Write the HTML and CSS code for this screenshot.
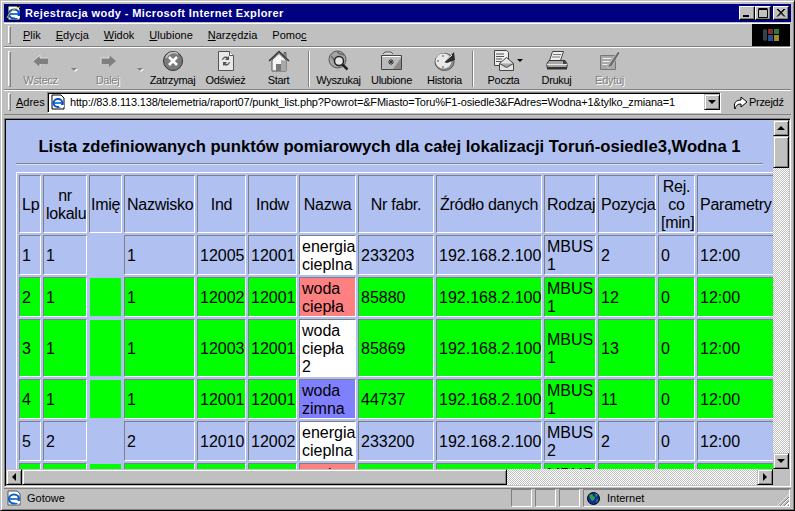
FILE: index.html
```html
<!DOCTYPE html>
<html lang="pl">

<head>
    <meta charset="UTF-8">
    <title>Rejestracja wody - Microsoft Internet Explorer</title>
    <link rel="stylesheet" href="styles.css">
</head>

<body>
    <div class="window">
        <div class="titlebar">
            <svg class="title-icon" width="16" height="16" viewBox="0 0 16 16">
                <path d="M2 1h9l3 3v11H2z" fill="#fff" stroke="#000"/>
                <ellipse cx="8" cy="9" rx="5" ry="4.5" fill="none" stroke="#0050d0" stroke-width="2.2"/>
                <path d="M3 9h10" stroke="#0050d0" stroke-width="1.6"/>
                <path d="M9 12h5" stroke="#fff" stroke-width="2"/>
                <path d="M1 13C3 7 9 3 14 2" fill="none" stroke="#f0c000"/>
            </svg>
            <span class="title-text">Rejestracja wody - Microsoft Internet Explorer</span>
            <div class="title-buttons">
                <div class="wbtn">
                    <svg width="14" height="12" viewBox="0 0 14 12"><path d="M3 8.500h6M3 9.500h6" stroke="#000"/></svg>
                </div>
                <div class="wbtn">
                    <svg width="14" height="12" viewBox="0 0 14 12"><path d="M2.500 2.500h9v8h-9zM2.500 1.500h9" fill="none" stroke="#000"/></svg>
                </div>
                <div class="wbtn wbtn-close">
                    <svg width="14" height="12" viewBox="0 0 14 12"><path d="M3 2l7 7.500M4 2l7 7.500M10 2l-7 7.500M11 2l-7 7.500" stroke="#000"/></svg>
                </div>
            </div>
        </div>

        <div class="band menubar">
            <div class="grip"></div>
            <nav class="menu">
                <span class="menu-item"><u>P</u>lik</span>
                <span class="menu-item"><u>E</u>dycja</span>
                <span class="menu-item"><u>W</u>idok</span>
                <span class="menu-item"><u>U</u>lubione</span>
                <span class="menu-item"><u>N</u>arzędzia</span>
                <span class="menu-item">Pomo<u>c</u></span>
            </nav>
            <div class="winlogo">
                <svg width="18" height="16" viewBox="0 0 18 16">
                    <path d="M1 3l2-1 2 1v10l-2 1-2-1z" fill="#354050"/>
                    <path d="M6 2h5v5H6z" fill="#8a2c20"/>
                    <path d="M12 2h5v5h-5z" fill="#2c7a38"/>
                    <path d="M6 8h5v6H6z" fill="#2a4c98"/>
                    <path d="M12 8h5v6h-5z" fill="#9a8a28"/>
                </svg>
            </div>
        </div>

        <div class="band toolbar">
            <div class="grip"></div>
            <div class="tool disabled t-back">
                <svg width="22" height="22" viewBox="0 0 22 22">
                    <path d="M3 11l7-6v3h8v6h-8v3z" fill="#808080"/>
                    <path d="M3 11l7-6v3h8M10 14v3" fill="none" stroke="#e0e0e0"/>
                </svg>
                <span>Wstecz</span>
            </div>
            <div class="drop"></div>
            <div class="tool disabled">
                <svg width="22" height="22" viewBox="0 0 22 22">
                    <path d="M19 11l-7-6v3H4v6h8v3z" fill="#808080"/>
                    <path d="M12 5v3H4v6" fill="none" stroke="#e0e0e0"/>
                </svg>
                <span>Dalej</span>
            </div>
            <div class="drop drop2"></div>
            <div class="tool">
                <svg width="22" height="22" viewBox="0 0 22 22">
                    <circle cx="11" cy="11" r="9.500" fill="#7a7a7a" stroke="#333"/>
                    <path d="M4 8a8 8 0 0 1 12-4" fill="none" stroke="#c8c8c8" stroke-width="1.500"/>
                    <path d="M7 7l8 8M15 7l-8 8" stroke="#fff" stroke-width="2.600"/>
                </svg>
                <span>Zatrzymaj</span>
            </div>
            <div class="tool">
                <svg width="22" height="22" viewBox="0 0 22 22">
                    <path d="M3.500 1.500h11l4 4v15h-15z" fill="#e8e8e8" stroke="#555"/>
                    <path d="M14.500 1.500v4h4" fill="#fff" stroke="#555"/>
                    <path d="M7 10a4 4 0 0 1 6-3l1-1v4h-4l1.500-1.500A2.500 2.500 0 0 0 8 10z" fill="#555"/>
                    <path d="M15 12a4 4 0 0 1-6 3l-1 1v-4h4l-1.500 1.500A2.500 2.500 0 0 0 14 12z" fill="#555"/>
                </svg>
                <span>Odśwież</span>
            </div>
            <div class="tool">
                <svg width="22" height="22" viewBox="0 0 22 22">
                    <path d="M1 11L11 1.500 21 11" fill="none" stroke="#333" stroke-width="1.500"/>
                    <path d="M16 2.500h2v5l-2-2z" fill="#999" stroke="#333" stroke-width=".6"/>
                    <path d="M4 10l7-6.500 7 6.500v11H4z" fill="#f4f4f4" stroke="#555"/>
                    <path d="M13 10l5 .500v10.500h-5z" fill="#a8a8a8"/>
                    <path d="M8 14h5v7H8z" fill="#777"/>
                </svg>
                <span>Start</span>
            </div>
            <div class="sep"></div>
            <div class="tool">
                <svg width="22" height="22" viewBox="0 0 22 22">
                    <circle cx="9.500" cy="9.500" r="8.500" fill="#a4a4a4" stroke="#555"/>
                    <path d="M3 6c3 2 2 5 5 5s1 4 4 5M10 1c-1 3 4 3 6 4" fill="none" stroke="#666" stroke-width="1.500"/>
                    <circle cx="11" cy="11" r="4.500" fill="#e4e4e4" stroke="#222" stroke-width="1.500"/>
                    <path d="M14.500 14.500l5 5" stroke="#222" stroke-width="2.500"/>
                </svg>
                <span>Wyszukaj</span>
            </div>
            <div class="tool">
                <svg width="22" height="22" viewBox="0 0 22 22">
                    <path d="M2 4l2-2h6l2 2" fill="#d8d8d8" stroke="#555"/>
                    <path d="M.500 5.500h20v14H.500z" fill="#bbb" stroke="#444"/>
                    <path d="M12 19L20 8v11z" fill="#8a8a8a"/>
                    <path d="M1.500 6.500h18" stroke="#fff"/>
                    <path d="M10 9v6M7 12h6M8 10l4 4M12 10l-4 4" stroke="#333"/>
                </svg>
                <span>Ulubione</span>
            </div>
            <div class="tool">
                <svg width="22" height="22" viewBox="0 0 22 22">
                    <ellipse cx="10.500" cy="12" rx="9.500" ry="8.500" fill="#8c8c8c" stroke="#555"/>
                    <ellipse cx="9.500" cy="11" rx="8" ry="7.500" fill="#e8e8e8"/>
                    <path d="M10 12L20 2l1 8-8 3z" fill="#2c2c2c"/>
                    <path d="M10 12L18 5" stroke="#fff"/>
                    <path d="M3 11h2M9 5v2M9 16v2" stroke="#555"/>
                </svg>
                <span>Historia</span>
            </div>
            <div class="sep sep2"></div>
            <div class="tool tool-mail">
                <svg width="30" height="22" viewBox="0 0 30 22">
                    <path d="M1.500 .500h12l2 2v13h-14z" fill="#eee" stroke="#444"/>
                    <path d="M3 4h8M3 6.500h8M3 9h6M3 11.500h5" stroke="#555"/>
                    <path d="M6.500 13.500l7-6 7 6v7h-14z" fill="#e4e4e4" stroke="#444"/>
                    <path d="M6.500 13.500l7 4 7-4" fill="#aaa" stroke="#444"/>
                    <path d="M24 9h6l-3 3z" fill="#000"/>
                </svg>
                <span>Poczta</span>
            </div>
            <div class="tool">
                <svg width="22" height="22" viewBox="0 0 22 22">
                    <path d="M6.500 1.500h11l-3 9h-11z" fill="#eee" stroke="#444"/>
                    <path d="M7 4.500h8M6 7h8" stroke="#777"/>
                    <path d="M3 10.500h16l2 3v4H1v-4z" fill="#a6a6a6" stroke="#333"/>
                    <path d="M1 14.500h20" stroke="#e8e8e8"/>
                    <path d="M1 17.500h20v2H1z" fill="#333"/>
                    <path d="M17 11h3v3h-3z" fill="#444"/>
                </svg>
                <span>Drukuj</span>
            </div>
            <div class="tool disabled">
                <svg width="22" height="22" viewBox="0 0 22 22">
                    <path d="M1.500 5.500h15v14h-15z" fill="#a8a8a8" stroke="#777"/>
                    <path d="M3.500 8.500h9M3.500 11.500h7M3.500 14.500h5" stroke="#eee"/>
                    <path d="M9 16L19 1l2 2-8 13-4 2z" fill="#6c6c6c" stroke="#e4e4e4" stroke-width=".6"/>
                </svg>
                <span>Edytuj</span>
            </div>
        </div>

        <div class="band addressbar">
            <div class="grip"></div>
            <span class="addr-label"><u>A</u>dres</span>
            <div class="addr-box">
                <svg width="16" height="16" viewBox="0 0 16 16">
                    <path d="M2 1h9l3 3v11H2z" fill="#fff" stroke="#000"/>
                    <ellipse cx="8" cy="9" rx="4.500" ry="4" fill="none" stroke="#0050d0" stroke-width="2"/>
                    <path d="M3 9h10" stroke="#0050d0" stroke-width="1.500"/>
                    <path d="M9 12h5" stroke="#fff" stroke-width="2"/>
                </svg>
                <span class="addr-url">http://83.8.113.138/telemetria/raport07/punkt_list.php?Powrot=&amp;FMiasto=Toru%F1-osiedle3&amp;FAdres=Wodna+1&amp;tylko_zmiana=1</span>
                <div class="sbtn addr-drop"><i class="arrow-down"></i></div>
            </div>
            <div class="go">
                <svg width="15" height="16" viewBox="0 0 15 16">
                    <path d="M2 15C0 9 3 6 8 6V3l6 5-6 5V10c-3 0-5 1-6 5z" fill="#fff" stroke="#000"/>
                </svg>
                <span>Przejdź</span>
            </div>
        </div>

        <div class="view">
            <div class="page">
                <h1>Lista zdefiniowanych punktów pomiarowych dla całej lokalizacji Toruń-osiedle3,Wodna 1</h1>
                <hr>
                <table>
                    <tr>
                        <th class="c1">Lp</th>
                        <th class="c2">nr lokalu</th>
                        <th class="c3">Imię</th>
                        <th class="c4">Nazwisko</th>
                        <th class="c5">Ind</th>
                        <th class="c6">Indw</th>
                        <th class="c7">Nazwa</th>
                        <th class="c8">Nr fabr.</th>
                        <th class="c9">Źródło danych</th>
                        <th class="c10">Rodzaj</th>
                        <th class="c11">Pozycja</th>
                        <th class="c12">Rej. co [min]</th>
                        <th class="c13">Parametry</th>
                    </tr>
                    <tr>
                        <td>1</td><td>1</td><td class="empty"></td><td>1</td><td>12005</td><td>12001</td>
                        <td class="white">energia cieplna</td><td>233203</td><td>192.168.2.100</td>
                        <td>MBUS 1</td><td>2</td><td>0</td><td>12:00</td>
                    </tr>
                    <tr class="on">
                        <td>2</td><td>1</td><td class="empty"></td><td>1</td><td>12002</td><td>12001</td>
                        <td class="pink">woda ciepła</td><td>85880</td><td>192.168.2.100</td>
                        <td>MBUS 1</td><td>12</td><td>0</td><td>12:00</td>
                    </tr>
                    <tr class="on">
                        <td>3</td><td>1</td><td class="empty"></td><td>1</td><td>12003</td><td>12001</td>
                        <td class="white">woda ciepła 2</td><td>85869</td><td>192.168.2.100</td>
                        <td>MBUS 1</td><td>13</td><td>0</td><td>12:00</td>
                    </tr>
                    <tr class="on">
                        <td>4</td><td>1</td><td class="empty"></td><td>1</td><td>12001</td><td>12001</td>
                        <td class="blue">woda zimna</td><td>44737</td><td>192.168.2.100</td>
                        <td>MBUS 1</td><td>11</td><td>0</td><td>12:00</td>
                    </tr>
                    <tr>
                        <td>5</td><td>2</td><td class="empty"></td><td>2</td><td>12010</td><td>12002</td>
                        <td class="white">energia cieplna</td><td>233200</td><td>192.168.2.100</td>
                        <td>MBUS 2</td><td>2</td><td>0</td><td>12:00</td>
                    </tr>
                    <tr class="on">
                        <td>6</td><td>2</td><td class="empty"></td><td>2</td><td>12009</td><td>12002</td>
                        <td class="pink">woda ciepła</td><td>85881</td><td>192.168.2.100</td>
                        <td>MBUS 2</td><td>12</td><td>0</td><td>12:00</td>
                    </tr>
                </table>
            </div>
            <div class="vscroll">
                <div class="sbtn"><i class="arrow-up"></i></div>
                <div class="sbtn vthumb"></div>
                <div class="track"></div>
                <div class="sbtn"><i class="arrow-down"></i></div>
            </div>
            <div class="hscroll">
                <div class="sbtn"><i class="arrow-left"></i></div>
                <div class="sbtn hthumb"></div>
                <div class="track"></div>
                <div class="sbtn"><i class="arrow-right"></i></div>
            </div>
            <div class="corner"></div>
        </div>

        <div class="statusbar">
            <svg width="16" height="16" viewBox="0 0 16 16">
                <path d="M2 1h9l3 3v11H2z" fill="#fff" stroke="#555"/>
                <ellipse cx="8" cy="9" rx="5" ry="4.500" fill="none" stroke="#1060c8" stroke-width="2.200"/>
                <path d="M3 9h10" stroke="#1060c8" stroke-width="1.600"/>
                <path d="M9 12h5" stroke="#fff" stroke-width="2"/>
            </svg>
            <span class="status-text">Gotowe</span>
            <div class="panel p1"></div>
            <div class="panel p1"></div>
            <div class="panel p1"></div>
            <div class="panel p2">
                <svg width="13" height="13" viewBox="0 0 13 13">
                    <circle cx="6.500" cy="6.500" r="6" fill="#1030a0" stroke="#000"/>
                    <path d="M2 3l3-1 1 2 2 1-1 3-2 1-2-3zM8 1l3 2-2 2zM9 8l2-1-1 4z" fill="#30a040"/>
                </svg>
                <span>Internet</span>
                <div class="sizer"></div>
            </div>
        </div>
    </div>
</body>

</html>
```

FILE: styles.css
```css
* {
    box-sizing: border-box;
}

body {
    margin: 0;
    background: #c0c0c0;
}

svg {
    display: block;
    flex: none;
}

.window {
    width: 795px;
    height: 511px;
    padding: 3px;
    display: flex;
    flex-direction: column;
    overflow: hidden;
    background: #c0c0c0;
    border: 1px solid;
    border-color: #c0c0c0 #000 #000 #c0c0c0;
    box-shadow: inset 1px 1px #fff, inset -1px -1px #808080;
    font-family: "Liberation Sans", Arial, sans-serif;
    font-size: 11px;
    color: #000;
}

/* title bar */
.titlebar {
    height: 19px;
    flex: none;
    display: flex;
    align-items: center;
    padding: 0 2px 1px 2px;
    background: #000080;
    border-bottom: 1px solid #c0c0c0;
}

.title-text {
    margin-left: 3px;
    color: #fff;
    font-weight: bold;
    font-size: 11px;
    letter-spacing: 0.4px;
}

.title-buttons {
    margin-left: auto;
    display: flex;
}

.wbtn {
    width: 16px;
    height: 14px;
    background: #c0c0c0;
    border: 1px solid;
    border-color: #fff #000 #000 #fff;
    box-shadow: inset -1px -1px #808080;
}

.wbtn-close {
    margin-left: 2px;
}

/* bands */
.band {
    flex: none;
    display: flex;
    align-items: center;
    border-top: 1px solid #fff;
    border-bottom: 1px solid #808080;
}

.grip {
    width: 3px;
    margin-left: 4px;
    align-self: stretch;
    margin-top: 2px;
    margin-bottom: 2px;
    flex: none;
    background: #c0c0c0;
    border: 1px solid;
    border-color: #fff #808080 #808080 #fff;
}

.menubar {
    height: 24px;
    margin-right: 1px;
}

.menu {
    display: flex;
    gap: 15px;
    margin-left: 12px;
}

.menu-item {
    white-space: nowrap;
}

.winlogo {
    margin-left: auto;
    width: 38px;
    height: 22px;
    background: #000;
    display: flex;
    align-items: center;
    justify-content: center;
}

.toolbar {
    height: 43px;
}

.toolbar .grip {
    margin-top: 3px;
    margin-bottom: 2px;
}

.tool {
    width: 53px;
    flex: none;
    display: flex;
    flex-direction: column;
    align-items: center;
    gap: 2px;
    white-space: nowrap;
}

.t-back {
    margin-left: 3px;
}

.tool span {
    line-height: 13px;
    letter-spacing: -0.3px;
}

.tool-mail svg {
    margin-left: 8px;
}

.disabled span {
    color: #808080;
    text-shadow: 1px 1px 0 #fff;
}

.drop {
    width: 14px;
    flex: none;
    display: flex;
    justify-content: center;
    margin-top: 1px;
}

.drop2 {
    width: 12px;
}

.drop::after {
    content: "";
    border-style: solid;
    border-width: 3px 3px 0 3px;
    border-color: #808080 transparent transparent transparent;
    filter: drop-shadow(1px 1px 0 #fff);
}

.sep {
    width: 2px;
    height: 36px;
    flex: none;
    margin: 0 2px 0 3px;
    border-left: 1px solid #808080;
    border-right: 1px solid #fff;
}

.sep2 {
    margin: 0 3px 0 1px;
}

.addressbar {
    height: 25px;
    padding-bottom: 1px;
}

.addr-label {
    margin-left: 5px;
    width: 31px;
    flex: none;
}

.addr-box {
    width: 674px;
    height: 21px;
    flex: none;
    display: flex;
    align-items: center;
    padding-left: 2px;
    background: #fff;
    border: 1px solid;
    border-color: #808080 #fff #fff #808080;
    box-shadow: inset 1px 1px #000;
}

.addr-url {
    margin-left: 4px;
    font-size: 11px;
    letter-spacing: -0.175px;
    white-space: nowrap;
    flex: 1;
    overflow: hidden;
}

.addr-drop {
    width: 16px;
    height: 17px;
    flex: none;
}

.go {
    margin-left: 12px;
    display: flex;
    align-items: center;
    gap: 1px;
    letter-spacing: -0.3px;
}

/* page area */
.view {
    margin-top: 3px;
    height: 369px;
    flex: none;
    display: grid;
    grid-template-columns: 767px 16px;
    grid-template-rows: 349px 16px;
    border: 1px solid;
    border-color: #808080 #fff #fff #808080;
    box-shadow: inset 1px 1px #000;
    padding: 1px 0 0 1px;
}

.page {
    overflow: hidden;
    background: #b0c0f0;
    padding: 0 0 0 10px;
    font-size: 16px;
}

h1 {
    margin: 16px 10px 0 0;
    text-align: center;
    font-size: 16.650px;
    line-height: 21px;
    font-weight: bold;
    white-space: nowrap;
}

hr {
    margin: 6px 10px 7px 0;
    height: 2px;
    border: 0;
    border-top: 1px solid #808080;
    border-bottom: 1px solid #d8e0f8;
}

table {
    width: 762px;
    table-layout: fixed;
    border-collapse: separate;
    border-spacing: 2px;
    border: 1px solid;
    border-color: #fff #808080 #808080 #fff;
    line-height: 18px;
}

th, td {
    padding: 2px 2px 0;
    border: 1px solid;
    border-color: #808080 #fff #fff #808080;
    background-clip: padding-box;
    font-weight: normal;
}

th {
    text-align: center;
    letter-spacing: -0.25px;
}

td {
    text-align: left;
}

.c1 { width: 22px; }
.c2 { width: 44px; }
.c3 { width: 33px; }
.c4 { width: 71px; }
.c5 { width: 49px; }
.c6 { width: 49px; }
.c7 { width: 57px; }
.c8 { width: 76px; }
.c9 { width: 106px; }
.c10 { width: 52px; }
.c11 { width: 58px; }
.c12 { width: 37px; }
.c13 { width: 78px; }

th.c3 { white-space: nowrap; padding: 2px 1px 0; }
th.c4 { white-space: nowrap; }
th.c9 { white-space: nowrap; }
th.c13 { white-space: nowrap; text-align: left; }

.on td {
    background-color: #00ff00;
}

td.empty {
    border-color: transparent;
}

.on td.white,
td.white {
    background-color: #fff;
}

.on td.pink {
    background-color: #ff8080;
}

.on td.blue {
    background-color: #8080ff;
}

/* scrollbars */
.vscroll {
    display: flex;
    flex-direction: column;
    width: 16px;
}

.hscroll {
    display: flex;
    height: 16px;
}

.sbtn {
    flex: none;
    width: 16px;
    height: 16px;
    display: flex;
    align-items: center;
    justify-content: center;
    background: #c0c0c0;
    border: 1px solid;
    border-color: #c0c0c0 #000 #000 #c0c0c0;
    box-shadow: inset 1px 1px #fff, inset -1px -1px #808080;
}

.vthumb {
    height: 32px;
}

.hthumb {
    width: 485px;
}

.track {
    flex: 1;
    background: repeating-conic-gradient(#fff 0 25%, #c0c0c0 0 50%) 0 0 / 2px 2px;
}

.corner {
    background: #c0c0c0;
}

.arrow-up, .arrow-down, .arrow-left, .arrow-right {
    width: 0;
    height: 0;
    border-style: solid;
}

.arrow-up {
    border-width: 0 4px 4px 4px;
    border-color: transparent transparent #000 transparent;
}

.arrow-down {
    border-width: 4px 4px 0 4px;
    border-color: #000 transparent transparent transparent;
}

.arrow-left {
    border-width: 4px 4px 4px 0;
    border-color: transparent #000 transparent transparent;
}

.arrow-right {
    border-width: 4px 0 4px 4px;
    border-color: transparent transparent transparent #000;
}

/* status bar */
.statusbar {
    margin-top: 1px;
    height: 19px;
    flex: none;
    display: flex;
    align-items: center;
    gap: 3px;
    padding-left: 2px;
    border-top: 1px solid #808080;
}

.status-text {
    margin-left: 2px;
    width: 481px;
}

.panel {
    height: 18px;
    flex: none;
    border: 1px solid;
    border-color: #808080 #fff #fff #808080;
}

.p1 {
    width: 21px;
}

.p2 {
    width: 207px;
    display: flex;
    align-items: center;
    gap: 7px;
    padding-left: 3px;
}

.sizer {
    margin-left: auto;
    align-self: flex-end;
    width: 12px;
    height: 12px;
    background: repeating-linear-gradient(135deg, #c0c0c0 0 1px, #808080 1px 2px, #fff 2px 3px);
    clip-path: polygon(100% 0, 100% 100%, 0 100%);
}
```
